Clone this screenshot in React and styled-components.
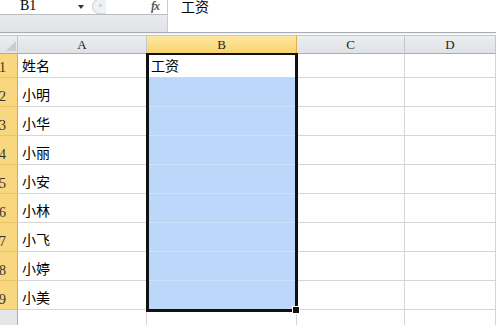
import React from "react";
import styled, { createGlobalStyle } from "styled-components";

const Global = createGlobalStyle`
  html, body {
    margin: 0;
    padding: 0;
    background: #fff;
    overflow: hidden;
  }
  body {
    font-family: "Noto Sans CJK SC", "Liberation Sans", sans-serif;
  }
`;

const Page = styled.div`
  width: 496px;
  height: 325px;
  overflow: hidden;
  display: flex;
  flex-direction: column;
`;

const TopBar = styled.div`
  display: flex;
  height: 33px;
  border-bottom: 1px solid #a7abb0;
  box-sizing: border-box;
  flex-shrink: 0;
`;

const NameArea = styled.div`
  width: 168px;
  display: flex;
  flex-direction: column;
  border-right: 1px solid #c9cdd2;
  box-sizing: border-box;
`;

const NameRow = styled.div`
  height: 15px;
  display: flex;
  align-items: center;
  border-bottom: 1px solid #b9bdc3;
  box-sizing: border-box;
`;

const NameBox = styled.div`
  width: 90px;
  display: flex;
  align-items: center;
  justify-content: space-between;
  padding-left: 20px;
  padding-right: 6px;
  box-sizing: border-box;
  font-family: "Liberation Serif", serif;
  font-size: 14px;
  line-height: 14px;
  margin-top: -2px;
  color: #000;
`;

const Arrow = styled.span`
  width: 0;
  height: 0;
  border-left: 3px solid transparent;
  border-right: 3px solid transparent;
  border-top: 4px solid #333;
  margin-top: 1px;
`;

const Fx = styled.span`
  margin-left: auto;
  margin-right: 8px;
  font-family: "Liberation Serif", serif;
  font-style: italic;
  font-weight: bold;
  font-size: 12px;
  line-height: 12px;
  color: #555;
  margin-top: -3px;
  letter-spacing: -1px;
`;

const GreyBand = styled.div`
  flex: 1;
  background: linear-gradient(#e8eaed, #e1e4e8);
`;

const Formula = styled.div`
  flex: 1;
  padding-left: 13px;
  font-size: 14px;
  line-height: 14px;
  margin-top: -1px;
  color: #000;
`;

const Spacer = styled.div`
  height: 2px;
  background: #f4f5f7;
  flex-shrink: 0;
`;

const SheetWrap = styled.div`
  position: relative;
  flex: 1;
`;

const Sheet = styled.div`
  display: grid;
  grid-template-columns: 18px 129px 150px 108px 1fr;
  grid-template-rows: 19px 24px repeat(8, 29px) 40px;
`;

const ColHead = styled.div`
  box-sizing: border-box;
  border-top: 1px solid #c6c9ce;
  border-right: 1px solid ${(p) => (p.$active ? "#e2b04a" : "#c3c7cc")};
  border-bottom: 1px solid ${(p) => (p.$active ? "#e0a93c" : "#a8adb5")};
  background: ${(p) =>
    p.$active
      ? "linear-gradient(#fde8a4, #f8d36c)"
      : "linear-gradient(#eceef1, #dfe2e6)"};
  display: flex;
  align-items: center;
  justify-content: center;
  font-family: "Liberation Serif", serif;
  font-size: 13px;
  color: #222;
`;

const Corner = styled(ColHead)`
  position: relative;
  &::after {
    content: "";
    position: absolute;
    right: 1px;
    bottom: 2px;
    width: 0;
    height: 0;
    border-left: 10px solid transparent;
    border-bottom: 10px solid #c9ccd1;
  }
`;

const RowHead = styled.div`
  box-sizing: border-box;
  border-right: 1px solid ${(p) => (p.$active ? "#e0a93c" : "#a8adb5")};
  border-bottom: 1px solid ${(p) => (p.$active ? "#eac46d" : "#c3c7cc")};
  background: ${(p) => (p.$active ? "#f9d77e" : "#e4e6ea")};
  display: flex;
  align-items: flex-end;
  padding-bottom: 3px;
  font-family: "Liberation Serif", serif;
  font-size: 14px;
  line-height: 13px;
  color: #333;
  text-indent: -1px;
`;

const Cell = styled.div`
  box-sizing: border-box;
  border-right: 1px solid #d6d6d6;
  border-bottom: 1px solid ${(p) => (p.$selected ? "#cde1fa" : "#d6d6d6")};
  background: ${(p) => (p.$selected ? "#bbd8fb" : "#fff")};
  display: flex;
  align-items: flex-end;
  padding: 0 0 4px 4px;
  font-size: 14px;
  line-height: 15px;
  color: #000;
`;

const Selection = styled.div`
  position: absolute;
  left: 146px;
  top: 18px;
  width: 152px;
  height: 259px;
  box-sizing: border-box;
  border: 3px solid #111;
  border-top-width: 2px;
  pointer-events: none;
`;

const Handle = styled.div`
  position: absolute;
  right: -5px;
  bottom: -5px;
  width: 6px;
  height: 6px;
  background: #111;
  border: 1px solid #fff;
`;

const names = ["姓名", "小明", "小华", "小丽", "小安", "小林", "小飞", "小婷", "小美"];

function Splitter() {
  return (
    <svg width="14" height="15" viewBox="0 0 14 15" style={{ marginLeft: 2, marginTop: -1 }}>
      <path d="M14 0 H8 A7 7 0 0 0 8 15 H14" fill="#eef0f2" stroke="#c6cacf" strokeWidth="1" />
      <rect x="7" y="5" width="3" height="3" fill="#d2d5d9" />
    </svg>
  );
}

export default function App() {
  return (
    <>
      <Global />
      <Page>
        <TopBar>
          <NameArea>
            <NameRow>
              <NameBox>
                <span>B1</span>
                <Arrow />
              </NameBox>
              <Splitter />
              <Fx>fx</Fx>
            </NameRow>
            <GreyBand />
          </NameArea>
          <Formula>工资</Formula>
        </TopBar>
        <Spacer />
        <SheetWrap>
          <Sheet>
            <Corner />
            <ColHead>A</ColHead>
            <ColHead $active>B</ColHead>
            <ColHead>C</ColHead>
            <ColHead>D</ColHead>
            {names.map((n, i) => (
              <React.Fragment key={i}>
                <RowHead $active>{i + 1}</RowHead>
                <Cell>{n}</Cell>
                <Cell $selected={i > 0}>{i === 0 ? "工资" : ""}</Cell>
                <Cell />
                <Cell />
              </React.Fragment>
            ))}
            <RowHead>10</RowHead>
            <Cell />
            <Cell />
            <Cell />
            <Cell />
          </Sheet>
          <Selection>
            <Handle />
          </Selection>
        </SheetWrap>
      </Page>
    </>
  );
}
